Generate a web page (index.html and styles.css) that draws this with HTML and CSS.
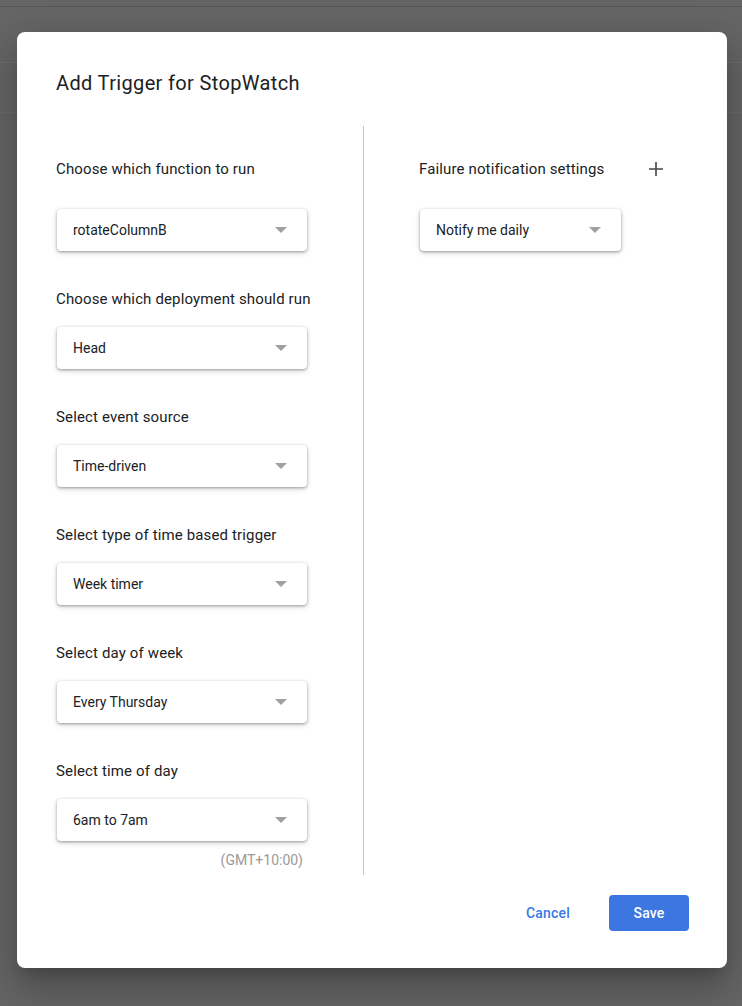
FILE: index.html
```html
<!DOCTYPE html>
<html>
<head>
<meta charset="utf-8">
<link rel="stylesheet" href="styles.css">
</head>
<body>
<div class="page">
  <div class="bg-bar bg-bar-1"></div>
  <div class="bg-bar bg-bar-2"></div>
  <div class="bg-bar bg-bar-3"></div>
</div>
<div class="dialog">
  <h1 class="title">Add Trigger for StopWatch</h1>
  <div class="body">
    <div class="col col-left">
      <div class="label first">Choose which function to run</div>
      <div class="select first-select"><span>rotateColumnB</span><i class="arrow"></i></div>
      <div class="label">Choose which deployment should run</div>
      <div class="select"><span>Head</span><i class="arrow"></i></div>
      <div class="label">Select event source</div>
      <div class="select"><span>Time-driven</span><i class="arrow"></i></div>
      <div class="label">Select type of time based trigger</div>
      <div class="select"><span>Week timer</span><i class="arrow"></i></div>
      <div class="label">Select day of week</div>
      <div class="select"><span>Every Thursday</span><i class="arrow"></i></div>
      <div class="label">Select time of day</div>
      <div class="select"><span>6am to 7am</span><i class="arrow"></i></div>
      <div class="tz">(GMT+10:00)</div>
    </div>
    <div class="col col-right">
      <div class="label-row">
        <div class="label first">Failure notification settings</div>
        <svg class="plus" width="14" height="14" viewBox="0 0 14 14"><path d="M7 0v14M0 7h14" stroke="#444" stroke-width="1.6" fill="none"/></svg>
      </div>
      <div class="select select-narrow first-select"><span>Notify me daily</span><i class="arrow"></i></div>
    </div>
  </div>
  <div class="actions">
    <button class="btn btn-text">Cancel</button>
    <button class="btn btn-primary">Save</button>
  </div>
</div>
</body>
</html>
```
FILE: styles.css
```css
* { box-sizing: border-box; }
html, body { margin: 0; padding: 0; }
body {
  width: 742px;
  height: 1006px;
  background: #666666;
  font-family: Roboto, "Liberation Sans", sans-serif;
  overflow: hidden;
  position: relative;
}
.page { display: flex; flex-direction: column; }
.bg-bar { border-bottom: 1px solid #5a5a5a; }
.bg-bar-1 { height: 7px; border-bottom-color: #575757; }
.bg-bar-2 { height: 56px; border-bottom-color: #6e6e6e; }
.bg-bar-3 { height: 50px; border-bottom-color: #6b6b6b; }

.dialog {
  position: absolute;
  left: 17px;
  top: 32px;
  width: 710px;
  height: 936px;
  background: #fff;
  border-radius: 8px;
  box-shadow: 0 11px 15px -7px rgba(0,0,0,0.2), 0 24px 38px 3px rgba(0,0,0,0.14), 0 9px 46px 8px rgba(0,0,0,0.12);
  display: flex;
  flex-direction: column;
}
.title {
  margin: 0;
  padding: 39px 0 0 39px;
  font-size: 20px;
  line-height: 24px;
  font-weight: 400;
  color: #202124;
  letter-spacing: 0.35px;
}
.body {
  display: flex;
  margin-top: 31px;
}
.col { display: flex; flex-direction: column; }
.col-left {
  width: 347px;
  padding-left: 39px;
  border-right: 1px solid #c4c4c4;
  padding-bottom: 6px;
}
.col-right {
  padding-left: 55px;
}
.label {
  font-size: 15px;
  line-height: 20px;
  color: #202124;
  margin-top: 38px;
  letter-spacing: 0.14px;
}
.label.first { margin-top: 33px; }
.label-row {
  display: flex;
  align-items: flex-end;
  width: 244px;
  justify-content: space-between;
}
.plus { margin-bottom: 3px; }
.select {
  width: 250px;
  height: 42px;
  margin-left: 1px;
  margin-top: 18px;
  border-radius: 4px;
  background: #fff;
  box-shadow: 0 1px 3px rgba(0,0,0,0.35), 0 2px 6px rgba(0,0,0,0.12);
  display: flex;
  align-items: center;
  justify-content: space-between;
  padding: 0 20px 0 16px;
  font-size: 14px;
  color: #202124;
}
.select.first-select { margin-top: 30px; }
.select-narrow { width: 201px; }
.arrow {
  width: 0;
  height: 0;
  border-left: 6px solid transparent;
  border-right: 6px solid transparent;
  border-top: 6px solid #a0a0a0;
}
.tz {
  width: 247px;
  text-align: right;
  margin-top: 10px;
  font-size: 14px;
  line-height: 18px;
  color: #9a9a9a;
}
.actions {
  display: flex;
  justify-content: flex-end;
  align-items: center;
  padding: 20px 38px 0 0;
  gap: 39px;
}
.btn {
  font-family: Roboto, "Liberation Sans", sans-serif;
  font-size: 14px;
  font-weight: 500;
  border: none;
  border-radius: 4px;
  height: 36px;
  cursor: pointer;
  letter-spacing: 0.2px;
}
.btn-text { background: transparent; color: #3b78e7; padding: 0; }
.btn-primary { background: #3b76e1; color: #fff; width: 80px; }
```
